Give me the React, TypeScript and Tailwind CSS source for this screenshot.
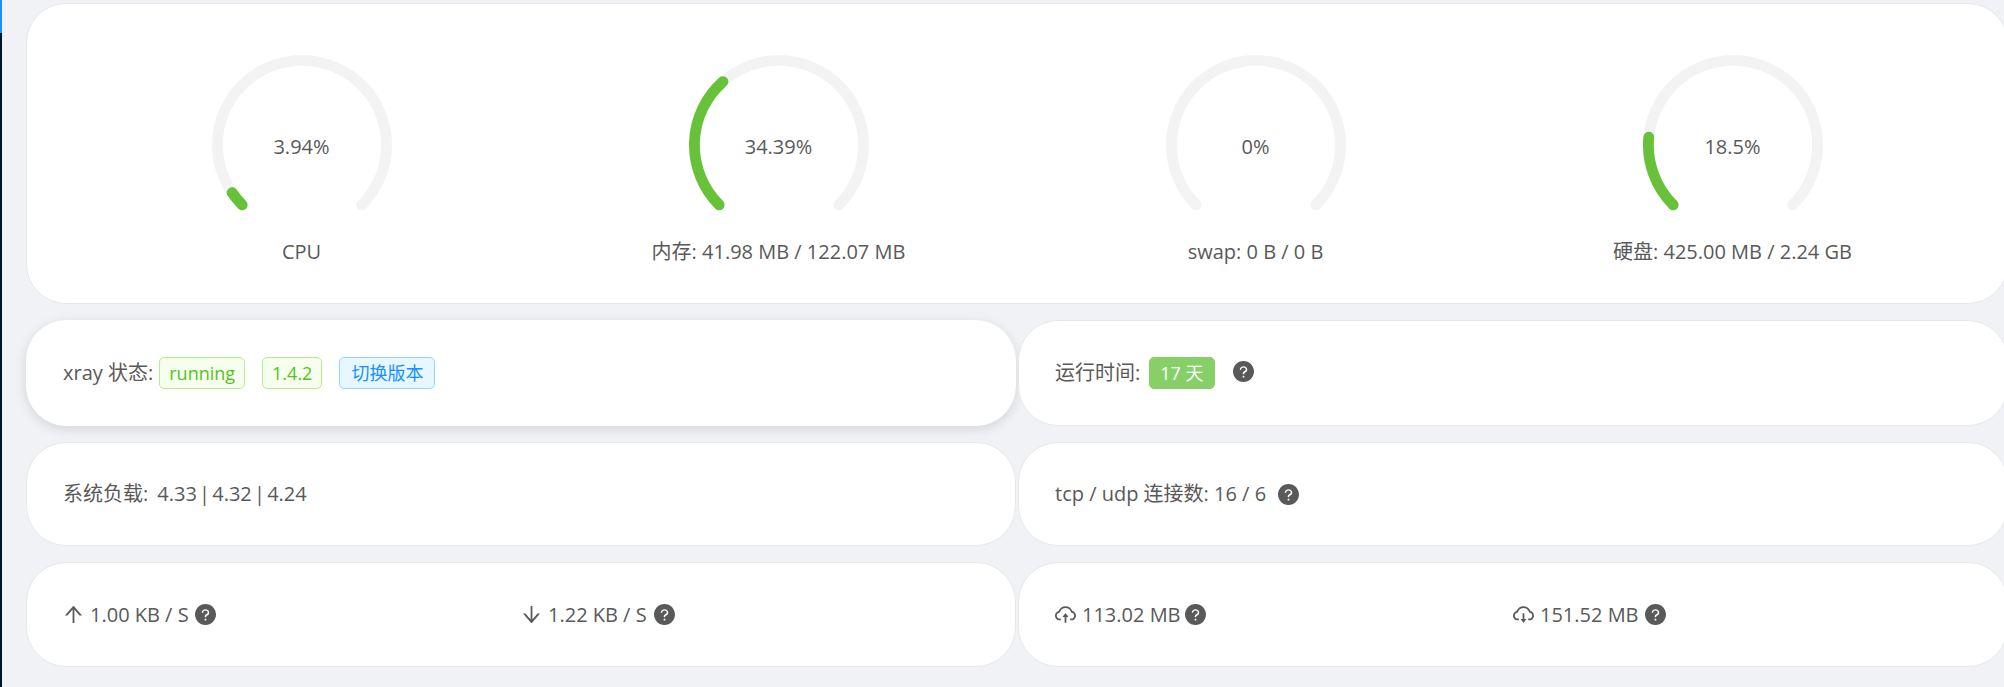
const cloud =
  'M811.4 366.7C765.6 245.9 648.9 160 512.2 160S258.8 245.8 213 366.6C127.3 389.1 64 467.2 64 560c0 110.5 89.5 200 199.9 200H304c4.4 0 8-3.6 8-8v-60c0-4.4-3.6-8-8-8h-40.1c-33.7 0-65.4-13.4-89-37.7-23.5-24.2-36-56.8-34.9-90.6.9-26.4 9.9-51.2 26.2-72.1 16.7-21.3 40.1-36.8 66.1-43.7l37.9-9.9 13.9-36.6c8.6-22.8 20.6-44.1 35.7-63.4a245.6 245.6 0 0 1 52.4-49.9c41.1-28.9 89.5-44.2 140-44.2s98.9 15.3 140 44.2c19.9 14 37.5 30.8 52.4 49.9 15.1 19.3 27.1 40.7 35.7 63.4l13.8 36.5 37.8 10C846.1 454.5 884 503.8 884 560c0 33.1-12.9 64.3-36.3 87.7a123.07 123.07 0 0 1-87.6 36.3H720c-4.4 0-8 3.6-8 8v60c0 4.4 3.6 8 8 8h40.1C870.5 760 960 670.5 960 560c0-92.7-63.1-170.7-148.6-193.3z';

const icons: Record<string, string[]> = {
  up: ['M868 545.5L536.1 163a31.96 31.96 0 0 0-48.3 0L156 545.5a7.97 7.97 0 0 0 6 13.2h81c4.6 0 9-2 12.1-5.5L474 300.9V864c0 4.4 3.6 8 8 8h60c4.4 0 8-3.6 8-8V300.9l218.9 252.3c3 3.5 7.4 5.5 12.1 5.5h81c6.8 0 10.5-8 6-13.2z'],
  down: ['M862 465.3h-81c-4.6 0-9 2-12.1 5.5L550 723.1V160c0-4.4-3.6-8-8-8h-60c-4.4 0-8 3.6-8 8v563.1L255.1 470.8c-3-3.5-7.4-5.5-12.1-5.5h-81c-6.8 0-10.5 8.1-6 13.2L487.9 861a31.96 31.96 0 0 0 48.3 0L868 478.5c4.5-5.2.8-13.2-6-13.2z'],
  cloudUp: ['M518.3 459a8 8 0 0 0-12.6 0l-112 141.7a7.98 7.98 0 0 0 6.3 12.9h73.9V856c0 4.4 3.6 8 8 8h60c4.4 0 8-3.6 8-8V613.7H624c6.7 0 10.4-7.7 6.3-12.9L518.3 459z', cloud],
  cloudDown: ['M624 706.3h-74.1V464c0-4.4-3.6-8-8-8h-60c-4.4 0-8 3.6-8 8v242.3H400c-6.7 0-10.4 7.7-6.3 12.9l112 141.7a8 8 0 0 0 12.6 0l112-141.7c4.1-5.2.4-12.9-6.3-12.9z', cloud],
  help: ['M512 64C264.6 64 64 264.6 64 512s200.6 448 448 448 448-200.6 448-448S759.4 64 512 64zm0 708c-22.1 0-40-17.9-40-40s17.9-40 40-40 40 17.9 40 40-17.9 40-40 40zm62.9-219.5a48.3 48.3 0 0 0-30.9 44.8V620c0 4.4-3.6 8-8 8h-48c-4.4 0-8-3.6-8-8v-21.5c0-23.1 6.7-45.9 19.9-64.9 12.9-18.6 30.9-32.8 52.1-40.9 34-13.1 56-41.6 56-72.7 0-44.1-43.1-80-96-80s-96 35.9-96 80v7.6c0 4.4-3.6 8-8 8h-48c-4.4 0-8-3.6-8-8V432c0-39.3 17.2-76 48.4-103.3C430.4 302.4 470 288 512 288s81.6 14.5 111.6 40.7C654.8 356 672 392.7 672 432c0 57.8-38.1 109.8-97.1 132.5z'],
};

function Icon({ name, className }: { name: string; className: string }) {
  return (
    <svg viewBox="64 64 896 896" fill="currentColor" className={className}>
      {icons[name].map((d, i) => (
        <path key={i} d={d} />
      ))}
    </svg>
  );
}

function Help({ className = 'ml-[7px]' }: { className?: string }) {
  return <Icon name="help" className={`w-[21px] h-[21px] shrink-0 ${className}`} />;
}

// angle is measured clockwise from straight down
function point(angle: number) {
  const a = (angle * Math.PI) / 180;
  return `${(90 - 84.6 * Math.sin(a)).toFixed(2)} ${(90 + 84.6 * Math.cos(a)).toFixed(2)}`;
}

function arc(from: number, to: number) {
  return `M ${point(from)} A 84.6 84.6 0 ${to - from > 180 ? 1 : 0} 1 ${point(to)}`;
}

function Gauge({ percent, label }: { percent: number; label: string }) {
  return (
    <div className="flex flex-col items-center">
      <div className="relative w-[180px] h-[180px]">
        <svg viewBox="0 0 180 180" fill="none" strokeWidth="10.8" strokeLinecap="round" className="w-full h-full">
          <path d={arc(45, 315)} stroke="#f3f3f3" />
          {percent > 0 && <path d={arc(45, 45 + (percent * 272) / 100)} stroke="#67c23a" />}
        </svg>
        <div className="absolute inset-0 flex items-center justify-center pt-[4px]">{percent}%</div>
      </div>
      <div className="mt-[1px] leading-[32px]">{label}</div>
    </div>
  );
}

function Card({ className, children }: { className: string; children: React.ReactNode }) {
  return (
    <div className={`flex items-center px-[36px] bg-white rounded-[40px] border border-[#e8e8e8] ${className}`}>
      {children}
    </div>
  );
}

function Tag({ className, children }: { className: string; children: React.ReactNode }) {
  return (
    <span className={`inline-flex items-center h-[32px] rounded-[5px] border text-[18px] ${className}`}>{children}</span>
  );
}

function Half({ icon, text, helpClass }: { icon: string; text: string; helpClass?: string }) {
  return (
    <div className="flex flex-1 items-center">
      <Icon name={icon} className="w-[21px] h-[21px] shrink-0" />
      <span className="ml-[6px]">{text}</span>
      <Help className={helpClass} />
    </div>
  );
}

export default function App() {
  return (
    <div className="flex h-screen overflow-hidden bg-[#f0f2f5] text-[#595959] text-[20px] font-['Open_Sans','Noto_Sans_CJK_SC',sans-serif]">
      <aside className="w-[2px] shrink-0 bg-[#001529]">
        <div className="h-[33px] bg-[#1890ff]" />
      </aside>
      <main className="w-[1982px] shrink-0 ml-[24px] pt-[3px] flex flex-col">
        <div className="h-[301px] bg-white rounded-[40px] border border-[#e8e8e8] px-[36px] pt-[51px] grid grid-cols-4">
          <Gauge percent={3.94} label="CPU" />
          <Gauge percent={34.39} label="内存: 41.98 MB / 122.07 MB" />
          <Gauge percent={0} label="swap: 0 B / 0 B" />
          <Gauge percent={18.5} label="硬盘: 425.00 MB / 2.24 GB" />
        </div>

        <div className="grid grid-cols-2 gap-x-[2px] gap-y-[16px] mt-[16px]">
          <Card className="h-[106px] border-white shadow-[0_3px_12px_rgba(0,0,0,0.12)]">
            <span className="mr-[6px]">xray 状态:</span>
            <Tag className="px-[9px] bg-[#f6ffed] border-[#b7eb8f] text-[#52c41a]">running</Tag>
            <Tag className="ml-[17px] px-[9px] bg-[#f6ffed] border-[#b7eb8f] text-[#52c41a]">1.4.2</Tag>
            <Tag className="ml-[17px] px-[11px] bg-[#e6f7ff] border-[#91d5ff] text-[#1890ff]">切换版本</Tag>
          </Card>
          <Card className="h-[106px]">
            <span className="mr-[9px]">运行时间:</span>
            <Tag className="px-[10px] bg-[#87d068] border-[#87d068] text-white">17 天</Tag>
            <Help className="ml-[18px] -mt-[3px]" />
          </Card>

          <Card className="h-[104px]">
            系统负载:<span className="ml-[9px] [word-spacing:-3px]">4.33 | 4.32 | 4.24</span>
          </Card>
          <Card className="h-[104px]">
            <span>tcp / udp 连接数: 16 / 6</span>
            <Help className="ml-[12px]" />
          </Card>

          <Card className="h-[105px]">
            <Half icon="up" text="1.00 KB / S" helpClass="ml-[6px]" />
            <Half icon="down" text="1.22 KB / S" helpClass="ml-[7px]" />
          </Card>
          <Card className="h-[105px]">
            <Half icon="cloudUp" text="113.02 MB" helpClass="ml-[4px]" />
            <Half icon="cloudDown" text="151.52 MB" helpClass="ml-[6px]" />
          </Card>
        </div>
      </main>
    </div>
  );
}
